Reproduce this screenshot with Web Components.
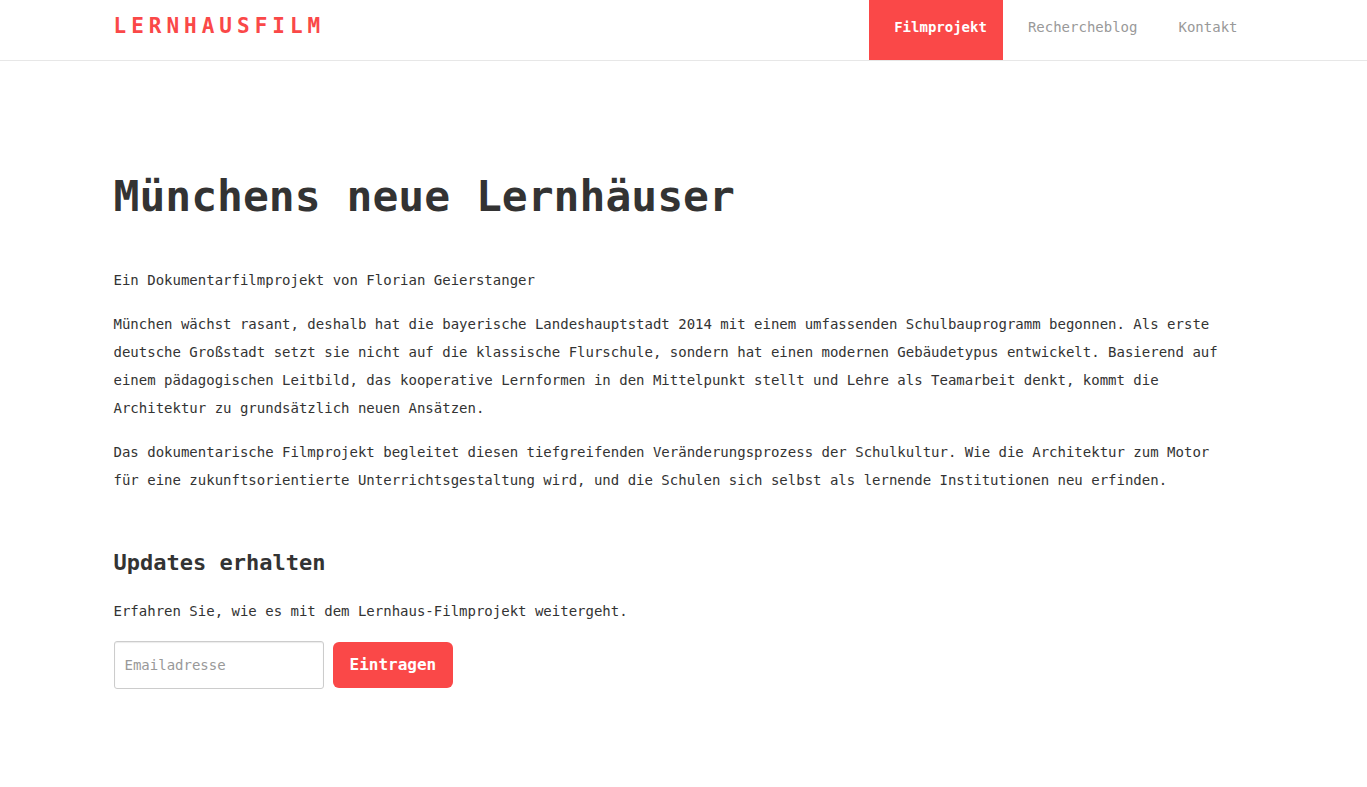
<!DOCTYPE html>
<html lang="de">
<head>
<meta charset="utf-8">
<meta name="viewport" content="width=device-width, initial-scale=1">
<title>Lernhausfilm</title>
<style>
  :root { --accent: #fa4848; --gutter: 15px; --page: 1170px; }
  body {
    margin: 0;
    background: #fff;
    color: #333;
    font: 14px/28px "DejaVu Sans Mono", "Liberation Mono", monospace;
  }
</style>
</head>
<body>
<site-header>
  <nav-tab href="#film" active>Filmprojekt</nav-tab>
  <nav-tab href="#blog">Rechercheblog</nav-tab>
  <nav-tab href="#kontakt">Kontakt</nav-tab>
</site-header>
<film-article>
  <span slot="title">Münchens neue Lernhäuser</span>
  <p>Ein Dokumentarfilmprojekt von Florian Geierstanger</p>
  <p>München wächst rasant, deshalb hat die bayerische Landeshauptstadt 2014 mit einem umfassenden Schulbauprogramm begonnen. Als erste deutsche Großstadt setzt sie nicht auf die klassische Flurschule, sondern hat einen modernen Gebäudetypus entwickelt. Basierend auf einem pädagogischen Leitbild, das kooperative Lernformen in den Mittelpunkt stellt und Lehre als Teamarbeit denkt, kommt die Architektur zu grundsätzlich neuen Ansätzen.</p>
  <p>Das dokumentarische Filmprojekt begleitet diesen tiefgreifenden Veränderungsprozess der Schulkultur. Wie die Architektur zum Motor für eine zukunftsorientierte Unterrichtsgestaltung wird, und die Schulen sich selbst als lernende Institutionen neu erfinden.</p>
  <newsletter-signup slot="signup">Erfahren Sie, wie es mit dem Lernhaus-Filmprojekt weitergeht.</newsletter-signup>
</film-article>

<script>
  const define = (name, markup, setup) =>
    customElements.define(name, class extends HTMLElement {
      constructor() {
        super();
        this.attachShadow({ mode: "open" }).innerHTML = markup;
      }
      connectedCallback() {
        if (setup) setup(this, this.shadowRoot);
      }
    });

  define("site-header", `
    <style>
      :host { display: block; border-bottom: 1px solid #e7e7e7; }
      .bar {
        box-sizing: border-box; max-width: var(--page); margin: 0 auto;
        padding: 0 var(--gutter);
        display: flex; flex-wrap: wrap; justify-content: space-between;
      }
      .logo {
        color: var(--accent); text-decoration: none;
        font-size: 21px; font-weight: bold; letter-spacing: 5px;
        line-height: 28px; padding: 12px 0 20px;
      }
      nav { display: flex; flex-wrap: wrap; }
    </style>
    <header class="bar">
      <a class="logo" href="#">LERNHAUSFILM</a>
      <nav><slot></slot></nav>
    </header>`);

  define("nav-tab", `
    <style>
      :host { display: block; }
      a {
        display: block; padding: 13px 16px 19px 25px;
        color: #999; text-decoration: none;
      }
      :host([active]) a { background: var(--accent); color: #fff; font-weight: bold; }
    </style>
    <a><slot></slot></a>`,
    (host, root) => {
      const link = root.querySelector("a");
      link.href = host.getAttribute("href");
      if (host.hasAttribute("active")) link.setAttribute("aria-current", "page");
    });

  define("film-article", `
    <style>
      :host {
        display: block; box-sizing: border-box;
        max-width: var(--page); margin: 0 auto;
        padding: 107px var(--gutter) 80px;
      }
      h1 { margin: 0 0 42px; font-size: 43px; line-height: 56px; }
      .text { padding-right: 16px; }
      ::slotted(p) { margin: 0 0 16px; }
    </style>
    <main>
      <h1><slot name="title"></slot></h1>
      <div class="text"><slot></slot></div>
      <slot name="signup"></slot>
    </main>`);

  define("newsletter-signup", `
    <style>
      :host { display: block; padding-top: 39px; }
      h2 { margin: 0 0 20px; font-size: 22px; line-height: 28px; }
      p { margin: 0 0 16px; }
      form { display: flex; flex-wrap: wrap; align-items: center; gap: 9px; }
      input, button { box-sizing: border-box; font: inherit; margin: 0; }
      input {
        width: 210px; height: 48px; padding: 0 10px;
        border: 1px solid #ccc; border-radius: 3px;
        box-shadow: inset 0 1px 1px rgba(0, 0, 0, .08);
        color: #333; background: #fff;
      }
      input::placeholder { color: #999; opacity: 1; }
      button {
        height: 46px; padding: 0 17px; border: 0; border-radius: 6px;
        background: var(--accent); color: #fff;
        font-size: 16px; font-weight: bold;
      }
    </style>
    <section>
      <h2>Updates erhalten</h2>
      <p><slot></slot></p>
      <form>
        <input type="email" name="email" placeholder="Emailadresse" aria-label="Emailadresse">
        <button type="submit">Eintragen</button>
      </form>
    </section>`);
</script>
</body>
</html>
